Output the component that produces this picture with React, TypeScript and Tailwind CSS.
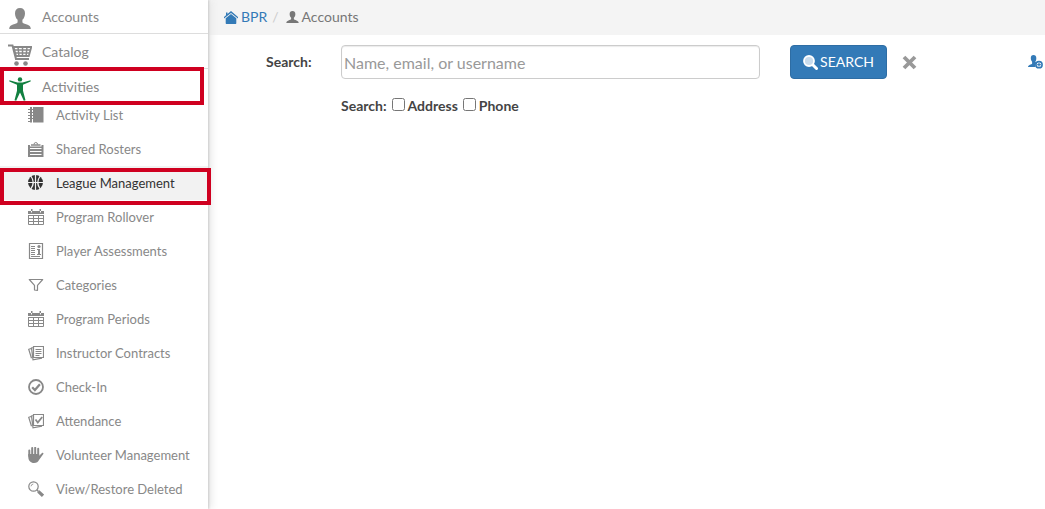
import React from 'react';

type IconProps = { className?: string };

const UserIcon = ({ className }: IconProps) => (
  <svg className={className} viewBox="0 0 22 21" fill="currentColor" aria-hidden="true">
    <path d="M11 0C7.800 0 6 2 6 5.200c0 2.800 1 5.300 2.600 6.600v2.400c-.4 1-2.200 1.500-4.600 2.300C1.600 17.400.3 18.300.2 21h21.600c-.1-2.700-1.400-3.600-3.800-4.500-2.400-.8-4.200-1.300-4.600-2.300v-2.400C15 10.500 16 8 16 5.200 16 2 14.200 0 11 0z" />
  </svg>
);

const CartIcon = ({ className }: IconProps) => (
  <svg className={className} viewBox="0 0 24 22" aria-hidden="true">
    <path d="M0 1.500h4.500L8 15h13" fill="none" stroke="currentColor" strokeWidth="2" />
    <path d="M5.500 3H23.300L20.800 12H8z" fill="none" stroke="currentColor" strokeWidth="1.800" />
    <path d="M6.500 6h16M7.300 9H22M10 3l1 9.500M14.500 3v9.500M19 3l-1 9.500" fill="none" stroke="currentColor" strokeWidth="1.500" />
    <circle cx="8.500" cy="19.500" r="2.300" fill="currentColor" />
    <circle cx="17.500" cy="19.500" r="2.300" fill="currentColor" />
  </svg>
);

const PersonIcon = ({ className }: IconProps) => (
  <svg className={className} viewBox="0 0 22 24" fill="currentColor" aria-hidden="true">
    <circle cx="11" cy="2.400" r="2.200" />
    <path d="M.4 3.200 8.500 5.500h5L21.600 3.200v1.200L14 7.700v6l2.500 9.500-1.700.5L11 15.500 7.200 23.700l-1.700-.5L8 13.700v-6L.4 4.400z" />
  </svg>
);

const NotebookIcon = ({ className }: IconProps) => (
  <svg className={className} viewBox="0 0 16 16" aria-hidden="true">
    <path d="M2 0h2v15.500H2zM5 0h10.500v15.500H5z" fill="currentColor" />
    <path d="M0 2.500h5M0 5.500h5M0 8.500h5M0 11.500h5M0 14.500h3" stroke="currentColor" />
  </svg>
);

const ClipboardIcon = ({ className }: IconProps) => (
  <svg className={className} viewBox="0 0 16 16" aria-hidden="true">
    <path d="M0 4h2v1.500h11.500V4h2v12H0z" fill="currentColor" />
    <path d="M3 4h9.500" stroke="currentColor" strokeWidth="1.500" />
    <path d="M6 3.500a1.800 2 0 0 1 3.600 0" fill="none" stroke="currentColor" />
    <path d="M2 7.500h11.500M2 10.500h11.500M2 13.500h11.500" stroke="#fff" />
  </svg>
);

const BasketballIcon = ({ className }: IconProps) => (
  <svg className={className} viewBox="0 0 16 16" aria-hidden="true">
    <circle cx="7.500" cy="7.500" r="7.500" fill="currentColor" />
    <path d="M7.500 0v15M0 7.500h15M2.800 1c3 4 3 9 0 13M12.200 1c-3 4-3 9 0 13" fill="none" stroke="#f2f2f2" strokeWidth="1.200" />
  </svg>
);

const CalendarIcon = ({ className }: IconProps) => (
  <svg className={className} viewBox="0 0 16 16" aria-hidden="true">
    <path d="M0 2h16v3H0zM3 0h1.500v2H3zM11.500 0H13v2h-1.500z" fill="currentColor" />
    <path d="M.5 6v9.500h15V6M0 6.500h16M.5 9.500h15M.5 12.500h15M5.500 6v9.500M10.500 6v9.500" fill="none" stroke="currentColor" />
    <path d="M3.500 2v1.500M12.500 2v1.500" stroke="#fff" />
  </svg>
);

const AssessmentIcon = ({ className }: IconProps) => (
  <svg className={className} viewBox="0 0 16 16" fill="none" stroke="currentColor" aria-hidden="true">
    <path d="M1.500.5h13v15h-13z" strokeWidth="1.200" />
    <path d="M3 3.500h4M3 5.500h4M3 7.500h4M3 9.500h4M3 11.500h4M3 13.500h9M9 6.500h2M9 11.500h4" />
    <path d="M11 6v6" strokeWidth="2" />
    <circle cx="11" cy="3.500" r="1.600" fill="currentColor" stroke="none" />
  </svg>
);

const FilterIcon = ({ className }: IconProps) => (
  <svg className={className} viewBox="0 0 16 16" fill="none" stroke="currentColor" strokeWidth="1.200" aria-hidden="true">
    <path d="M1.300 2.500h13.400L9.500 8.300v5L6.500 13V8.300z" strokeLinejoin="round" />
  </svg>
);

const ContractsIcon = ({ className }: IconProps) => (
  <svg className={className} viewBox="0 0 16 16" fill="none" stroke="currentColor" aria-hidden="true">
    <path d="M5.500 1.500h10v11h-10zM5.500 2.500l-2 .4 1.500 12 9-1.800M3 3.500l-2.300.8 2.800 9" strokeWidth="1.200" />
    <path d="M7.500 4.500h6M7.500 6.500h6M7.500 8.500h6M7.500 10.500h4" />
  </svg>
);

const AttendanceIcon = ({ className }: IconProps) => (
  <svg className={className} viewBox="0 0 16 16" fill="none" stroke="currentColor" aria-hidden="true">
    <path d="M5.500 1.500h10v11h-10zM5.500 2.500l-2 .4 1.500 12 9-1.800M3 3.500l-2.300.8 2.800 9" strokeWidth="1.200" />
    <path d="m7.500 6.500 2.300 3 4.400-5.500" strokeWidth="1.800" />
  </svg>
);

const CheckCircleIcon = ({ className }: IconProps) => (
  <svg className={className} viewBox="0 0 16 16" fill="none" stroke="currentColor" aria-hidden="true">
    <circle cx="8" cy="8" r="7" strokeWidth="1.800" />
    <path d="m4.200 8.200 2.700 2.800 5-5.800" strokeWidth="2.200" />
  </svg>
);

const HandIcon = ({ className }: IconProps) => (
  <svg className={className} viewBox="0 0 16 16" aria-hidden="true">
    <path d="M1.300 3.500V9M4.200 1v7M7.200.8V8M10.200 1.800V8" stroke="currentColor" strokeWidth="2" strokeLinecap="round" />
    <path d="M.3 7h10.900v1.800L14 6c.8-.4 1.500.1 1.500.7L11 13c-.8 1.800-2.400 3-5 3C2.700 16 .3 13.500.3 10z" fill="currentColor" />
  </svg>
);

const MagnifierIcon = ({ className }: IconProps) => (
  <svg className={className} viewBox="0 0 16 16" fill="none" stroke="currentColor" aria-hidden="true">
    <circle cx="5.500" cy="5.500" r="4.700" strokeWidth="1.200" />
    <path d="M3 5.300A2.600 2.600 0 0 1 5.300 3" strokeWidth=".8" />
    <path d="M9 9l1.500 1.500" strokeWidth="1.500" />
    <path d="M10.300 10.300 15 14.800" strokeWidth="3.200" />
  </svg>
);

const HomeIcon = ({ className }: IconProps) => (
  <svg className={className} viewBox="0 0 14 13" fill="currentColor" aria-hidden="true">
    <path d="M7 0 14 6v1.500L7 2 0 7.500V6l2-1.700V1.500h1.500V3z" />
    <path d="M7 3 12.300 7.200V12c0 .6-.3 1-1 1H2.700c-.7 0-1-.4-1-1V7.200z" />
  </svg>
);

const SearchIcon = ({ className }: IconProps) => (
  <svg className={className} viewBox="0 0 15 15" aria-hidden="true">
    <path d="m9 9 4.500 4.500" stroke="#fff" strokeWidth="3" strokeLinecap="round" />
    <circle cx="6" cy="6" r="5" fill="#c9dced" stroke="#fff" strokeWidth="1.800" />
  </svg>
);

const AddUserIcon = ({ className }: IconProps) => (
  <svg className={className} viewBox="0 0 15 14" aria-hidden="true">
    <path d="M5.500 0C3.700 0 2.800 1.300 2.800 3c0 1.700.6 3 1.300 3.700v2C3.800 9.700 0 9.600 0 12h7.500c-.3-2.300.4-3.700 1.500-4.500l-1.800-.4C8 6 8.300 4.700 8.300 3 8.300 1.200 7.300 0 5.500 0z" fill="currentColor" />
    <circle cx="11" cy="9.700" r="3.100" fill="none" stroke="currentColor" strokeWidth="1.600" />
    <path d="M11 7.900v3.600M9.200 9.700h3.600" stroke="currentColor" strokeWidth="1.200" />
  </svg>
);

const subItems = [
  { label: 'Activity List', icon: NotebookIcon },
  { label: 'Shared Rosters', icon: ClipboardIcon },
  { label: 'League Management', icon: BasketballIcon, active: true },
  { label: 'Program Rollover', icon: CalendarIcon },
  { label: 'Player Assessments', icon: AssessmentIcon },
  { label: 'Categories', icon: FilterIcon },
  { label: 'Program Periods', icon: CalendarIcon },
  { label: 'Instructor Contracts', icon: ContractsIcon },
  { label: 'Check-In', icon: CheckCircleIcon },
  { label: 'Attendance', icon: AttendanceIcon },
  { label: 'Volunteer Management', icon: HandIcon },
  { label: 'View/Restore Deleted', icon: MagnifierIcon },
];

const Sidebar = () => {
  return (
    <nav className="relative z-10 w-52 shrink-0 bg-white text-[#888] shadow-[1px_0_2px_#ccc,3px_0_8px_#e5e5e5]">
      <a href="#" className="flex h-[34px] items-start border-b border-[#ddd] pl-2 pt-[7px]">
        <span className="w-[34px] pl-px pt-px">
          <UserIcon className="h-[21px] w-[22px]" />
        </span>
        <span className="text-sm leading-5">Accounts</span>
      </a>
      <a href="#" className="flex h-[35px] items-start border-b border-[#ddd] pl-2 pt-2">
        <span className="w-[34px] pt-0.5">
          <CartIcon className="h-[22px] w-6" />
        </span>
        <span className="text-sm leading-5">Catalog</span>
      </a>
      <a href="#" className="relative flex h-[29px] items-start pl-2 pt-2">
        <span className="w-[34px] pl-px text-[#128040]">
          <PersonIcon className="h-6 w-[22px]" />
        </span>
        <span className="text-sm leading-5">Activities</span>
        <span className="absolute -top-0.5 left-0 z-10 h-[38px] w-[204px] border-4 border-[#cf0020]" />
      </a>
      <ul>
        {subItems.map(({ label, icon: Icon, active }) => (
          <li key={label} className="relative">
            <a
              href="#"
              className={
                active
                  ? 'flex h-[34px] items-center gap-3 bg-[#f2f2f2] pl-7 text-[#333]'
                  : 'flex h-[34px] items-center gap-3 pl-7'
              }
            >
              <Icon className="size-4 shrink-0" />
              <span className="whitespace-nowrap text-[13px] leading-5">{label}</span>
            </a>
            {active && (
              <span className="absolute left-0 top-0.5 h-[37px] w-[211px] border-4 border-[#cf0020]" />
            )}
          </li>
        ))}
      </ul>
    </nav>
  );
};

const Breadcrumb = () => {
  return (
    <nav className="flex h-[35px] items-start bg-[#f4f4f4] pl-4 pt-[7px] text-sm leading-5">
      <a href="#" className="flex items-center gap-[3px] text-[#337ab7]">
        <HomeIcon className="h-[13px] w-3.5" />
        BPR
      </a>
      <span className="px-[5px] text-[#ccc]">/</span>
      <span className="ml-0.5 flex items-center gap-[3px] text-[#777]">
        <UserIcon className="h-3 w-[13px]" />
        Accounts
      </span>
    </nav>
  );
};

const SearchForm = () => {
  return (
    <form className="pt-2.5 text-sm text-[#444]" onSubmit={(e) => e.preventDefault()}>
      <div className="flex items-center">
        <label htmlFor="search" className="w-[133px] shrink-0 pl-[58px] font-bold leading-5">
          Search:
        </label>
        <input
          id="search"
          type="text"
          placeholder="Name, email, or username"
          className="h-[34px] min-w-0 flex-1 rounded border border-[#ccc] bg-white px-0.5 text-base shadow-[inset_0_1px_1px_#ececec] placeholder:text-[#999]"
        />
        <button
          type="submit"
          className="ml-[30px] flex h-[34px] w-[97px] items-center justify-center gap-0.5 rounded border border-[#2e6da4] bg-[#337ab7] text-white"
        >
          <SearchIcon className="size-[15px]" />
          SEARCH
        </button>
        <button type="button" aria-label="Clear" className="ml-[15px] text-[#999]">
          <svg className="size-[15px]" viewBox="0 0 15 15" aria-hidden="true">
            <path d="m2 2 11 11M13 2 2 13" stroke="currentColor" strokeWidth="3.800" />
          </svg>
        </button>
        <a href="#" aria-label="Add account" className="ml-[111px] mr-0.5 text-[#337ab7]">
          <AddUserIcon className="h-3.5 w-[15px]" />
        </a>
      </div>
      <div className="mt-[17px] flex items-start pl-[133px] font-bold leading-5">
        <span className="mr-[5px]">Search:</span>
        <input id="address" type="checkbox" className="mr-[3px] mt-0.5 size-[13px]" />
        <label htmlFor="address" className="mr-[5px]">
          Address
        </label>
        <input id="phone" type="checkbox" className="mr-[3px] mt-0.5 size-[13px]" />
        <label htmlFor="phone">Phone</label>
      </div>
    </form>
  );
};

const App = () => {
  return (
    <div className="flex min-h-screen bg-white font-['Lato',sans-serif]">
      <Sidebar />
      <main className="min-w-0 flex-1">
        <Breadcrumb />
        <SearchForm />
      </main>
    </div>
  );
};

export default App;
